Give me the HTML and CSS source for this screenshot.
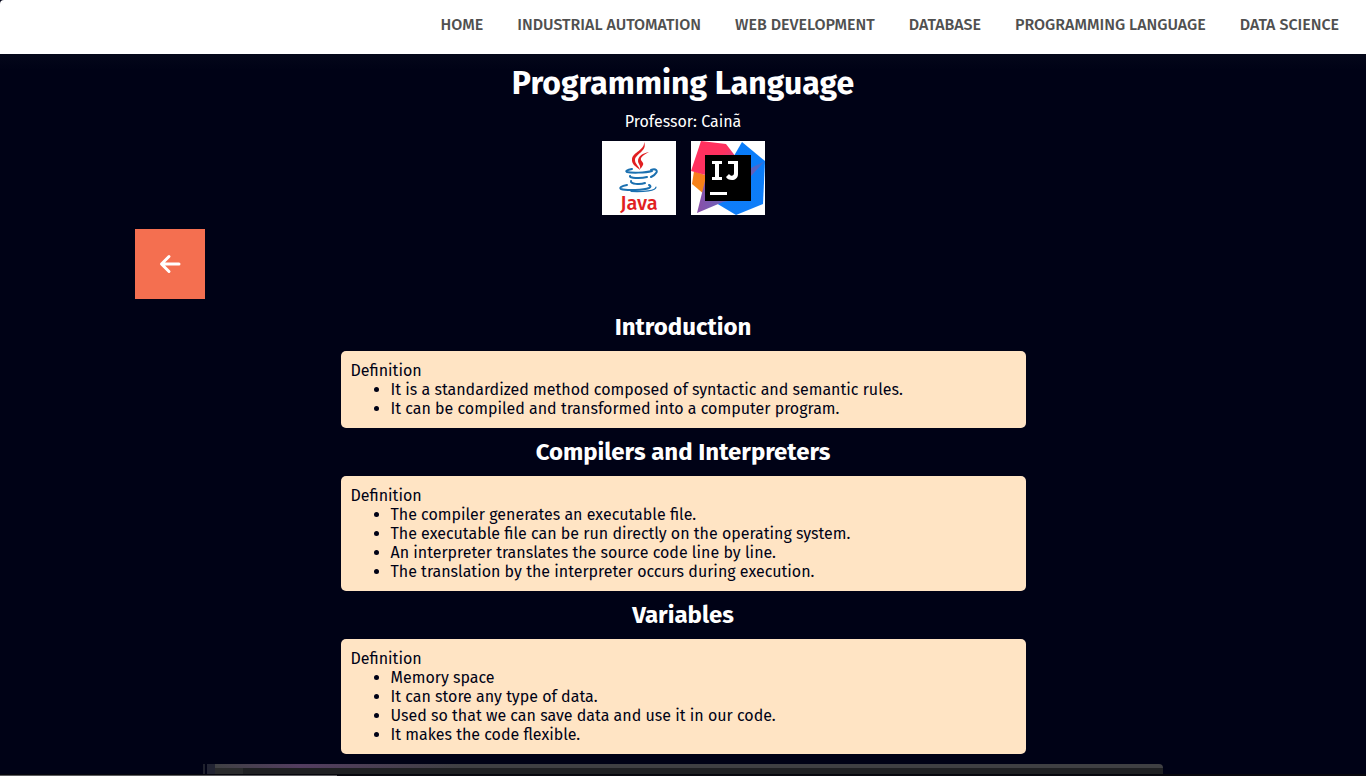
FILE: index.html
```html
<!DOCTYPE html>
<html lang="en">
<head>
<meta charset="utf-8">
<meta name="viewport" content="width=device-width, initial-scale=1">
<title>Programming Language</title>
<link rel="stylesheet" href="styles.css">
</head>
<body>
<header class="topbar">
  <nav aria-label="Main">
    <ul class="menu">
      <li><a href="#home">HOME</a></li>
      <li><a href="#automation">INDUSTRIAL AUTOMATION</a></li>
      <li><a href="#web">WEB DEVELOPMENT</a></li>
      <li><a href="#database">DATABASE</a></li>
      <li><a href="#programming">PROGRAMMING LANGUAGE</a></li>
      <li><a href="#data">DATA SCIENCE</a></li>
    </ul>
  </nav>
</header>
<main>
  <h1>Programming Language</h1>
  <p class="professor">Professor: Cainã</p>
  <div class="logos">
    <svg class="logo" viewBox="0 0 74 74" role="img" aria-label="Java">
      <rect width="74" height="74" fill="#fff"/>
      <g fill="#e11f21">
        <path d="M42 1c4 9-9 12-9 18 0 4 4 6 5 10-5-4-8.500-6-8-11 1-7 13-9 12-17Z"/>
        <path d="M47 11c-5 3-9 5-8 8 1 2 3 3 2 5-1 2-2 3-3 4 1-4-2-5-2-8 0-5 5-8 11-9Z"/>
      </g>
      <g fill="none" stroke="#1b70b0" stroke-width="2" stroke-linecap="round">
        <path d="M30 28c-5 1-7 2-5 3 4 1 18 1 25-1"/>
        <path d="M49 29c5-2 7 1 5 3-1 2-3 3-5 4"/>
        <path d="M28 35c-1 2 10 3 17 1"/>
        <path d="M29 40c-1 3 9 4 14 2"/>
        <path d="M25 44c-6 1-8 3-6 4 6 2 23 1 28-1 2-1 2-2 0-3"/>
        <path d="M54 46c0 4-12 5-25 4.500" stroke-width="1.200"/>
      </g>
      <text class="java-word" x="37" y="69" text-anchor="middle" fill="#e11f21">Java</text>
    </svg>
    <svg class="logo" viewBox="0 0 74 74" role="img" aria-label="IntelliJ IDEA">
      <defs>
        <linearGradient id="ij-pink" x1="0" y1="0" x2="1" y2="1"><stop offset=".5" stop-color="#ff315f"/><stop offset="1" stop-color="#9a5aa8"/></linearGradient>
        <linearGradient id="ij-blue" x1="0" y1="0" x2="0" y2="1"><stop offset="0" stop-color="#087cfa"/><stop offset="1" stop-color="#0f7df8"/></linearGradient>
        <linearGradient id="ij-shade" x1="0" y1="1" x2="1" y2="0"><stop offset="0" stop-color="#6f5bb5"/><stop offset="1" stop-color="#2a72e0"/></linearGradient>
        <linearGradient id="ij-violet" x1="0" y1="0" x2="1" y2="0"><stop offset="0" stop-color="#8a4fa8"/><stop offset=".5" stop-color="#7060b8"/><stop offset="1" stop-color="#1c7bf0"/></linearGradient>
        <linearGradient id="ij-orange" x1="0" y1="0" x2="0" y2="1"><stop offset="0" stop-color="#f97a20"/><stop offset="1" stop-color="#f58a13"/></linearGradient>
      </defs>
      <rect width="74" height="74" fill="#fff"/>
      <path d="M3 30 14 34V54L1 43Z" fill="url(#ij-orange)"/>
      <path d="M51 1 74 20 72 63 45 74 25 62 40 20Z" fill="url(#ij-blue)"/>
      <path d="M74 20 60 35V27Z" fill="url(#ij-shade)"/>
      <path d="M14 40 6 72 32 61 50 58Z" fill="url(#ij-violet)"/>
      <path d="M10 0 35 3 45 16 36 40 0 30Z" fill="url(#ij-pink)"/>
      <path d="M14 14h46v46H14z"/>
      <g fill="#fff">
        <path d="M21 20h10v3h-3v13h3v3H21v-3h3V23h-3zM37 20h10v13c0 4-3 6-6 6-3 0-5-1-6-3l3-3c2 3 5 2 5-1v-9h-6z"/>
        <path d="M19 51h17v3H19z"/>
      </g>
    </svg>
  </div>
  <a class="back" href="#home" aria-label="Back">
    <svg viewBox="0 0 24 24" width="24" height="24" fill="none" stroke="#fff" stroke-width="3" stroke-linecap="round" stroke-linejoin="round" aria-hidden="true"><path d="M21 12H4M11 4.500 3.500 12l7.500 7.500"/></svg>
  </a>
  <section>
    <h2>Introduction</h2>
    <div class="note">
      <p>Definition</p>
      <ul>
        <li>It is a standardized method composed of syntactic and semantic rules.</li>
        <li>It can be compiled and transformed into a computer program.</li>
      </ul>
    </div>
  </section>
  <section>
    <h2>Compilers and Interpreters</h2>
    <div class="note">
      <p>Definition</p>
      <ul>
        <li>The compiler generates an executable file.</li>
        <li>The executable file can be run directly on the operating system.</li>
        <li>An interpreter translates the source code line by line.</li>
        <li>The translation by the interpreter occurs during execution.</li>
      </ul>
    </div>
  </section>
  <section>
    <h2>Variables</h2>
    <div class="note">
      <p>Definition</p>
      <ul>
        <li>Memory space</li>
        <li>It can store any type of data.</li>
        <li>Used so that we can save data and use it in our code.</li>
        <li>It makes the code flexible.</li>
      </ul>
    </div>
  </section>
  <div class="preview" aria-hidden="true">
    <span class="sliver"></span>
    <span class="edge"></span>
    <div class="window"><div class="titlebar"></div><div class="toolbar"></div></div>
  </div>
</main>
<div class="progress" aria-hidden="true"></div>
</body>
</html>
```
FILE: styles.css
```css
* {
  box-sizing: border-box;
  margin: 0;
  padding: 0;
}

body {
  background: #000216;
  color: #fff;
  font-family: "Fira Sans", "Noto Sans", sans-serif;
  font-size: 16px;
  line-height: 19px;
}

.topbar {
  background: #fff;
  border-top-left-radius: 4px;
  padding: 15px 27px 20px;
}

.menu {
  display: flex;
  justify-content: flex-end;
  gap: 34px;
  list-style: none;
}

.menu a {
  color: #505050;
  font-weight: 500;
  text-decoration: none;
}

main {
  background: linear-gradient(#04071a, #000216 16px, #000216);
  padding-top: 10px;
}

h1 {
  font-size: 32px;
  line-height: 38px;
  text-align: center;
}

.professor {
  margin: 10px 0;
  text-align: center;
}

.logos {
  display: flex;
  justify-content: center;
  gap: 15px;
}

.logo {
  width: 74px;
  height: 74px;
}

.java-word {
  font-family: "Fira Sans", "Noto Sans", sans-serif;
  font-size: 20px;
  font-weight: 500;
}

.back {
  display: flex;
  align-items: center;
  justify-content: center;
  width: 70px;
  height: 70px;
  margin: 14px 0 14px 135px;
  background: #f46f50;
}

h2 {
  margin-bottom: 10px;
  font-size: 24px;
  line-height: 28px;
  text-align: center;
}

.note {
  width: calc(50% + 2px);
  margin: 0 auto 10px;
  padding: 10px;
  border-radius: 5px;
  background: #ffe4c4;
  color: #000216;
}

.note ul {
  padding-left: 40px;
}

.preview {
  display: flex;
  gap: 2px;
  width: calc(70% + 3px);
  margin: 0 auto;
}

.sliver {
  width: 2px;
  background: #20222e;
}

.edge {
  width: 8px;
  background: #222433;
}

.window {
  flex: 1;
  margin-left: -2px;
  overflow: hidden;
  border-top-right-radius: 4px;
}

.titlebar {
  height: 4px;
  background: linear-gradient(90deg, #404144, #533d60 9%, #3f4043 26%);
}

.toolbar {
  height: 6px;
  background: linear-gradient(90deg, #2a2b2d 28px, #1f2023 28px);
}

.progress {
  height: 2px;
  border-top: 1px solid #07070d;
  background: linear-gradient(90deg, #5c5c60 337px, #090910 337px);
}
```
